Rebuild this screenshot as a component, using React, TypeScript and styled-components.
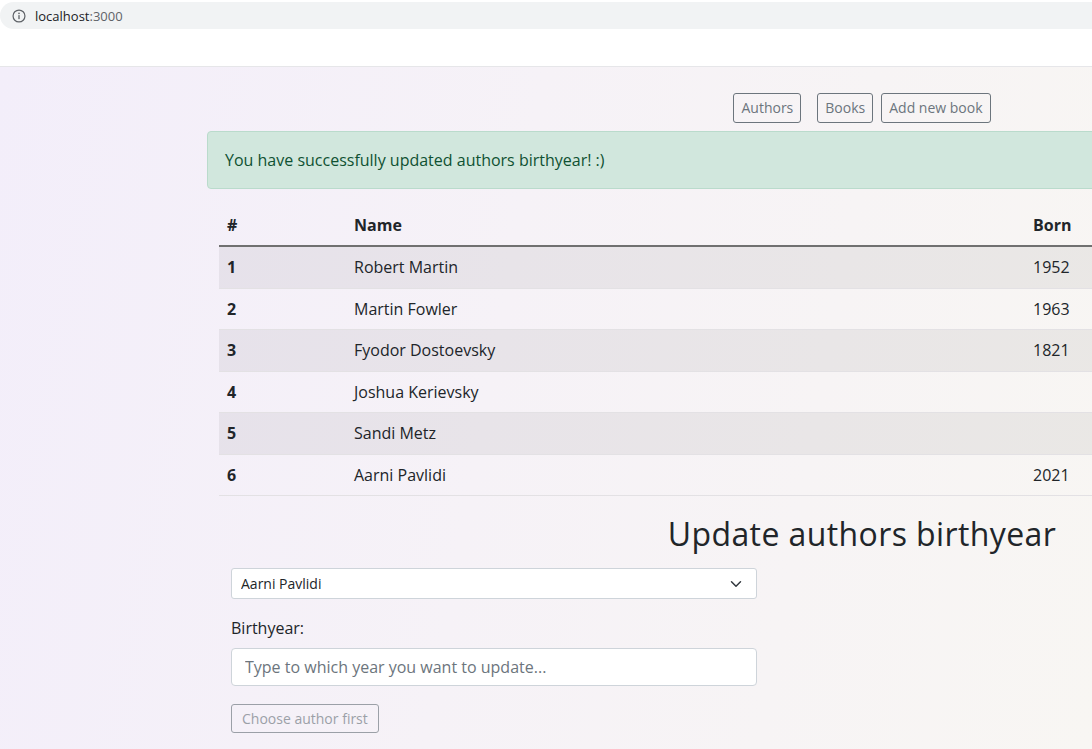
import React from "react";
import styled, { createGlobalStyle } from "styled-components";

const GlobalStyle = createGlobalStyle`
  html, body {
    margin: 0;
    padding: 0;
    overflow: hidden;
  }
  body {
    font-family: "Open Sans", "Liberation Sans", sans-serif;
    color: #212529;
    background: #ffffff;
  }
  * {
    box-sizing: border-box;
  }
`;

const BrowserBar = styled.div`
  height: 67px;
  background: #ffffff;
  border-bottom: 1px solid #e6e6e9;
  padding-top: 2px;
`;

const AddressPill = styled.div`
  display: flex;
  align-items: center;
  gap: 9px;
  height: 27px;
  width: 1120px;
  padding-left: 12px;
  background: #f1f3f4;
  border-radius: 14px;
  font-family: "Open Sans", "Liberation Sans", sans-serif;
  font-size: 13px;
  color: #202124;
`;

const Port = styled.span`
  color: #5f6368;
`;

const Page = styled.div`
  height: 682px;
  background: linear-gradient(100deg, #f3eefa 0%, #f6f2f7 45%, #f8f6f3 100%);
`;

const Container = styled.div`
  width: 1320px;
  margin-left: 207px;
  padding-top: 26px;
`;

const Nav = styled.nav`
  display: flex;
  justify-content: center;
  padding-right: 10px;
  margin-bottom: 8px;
`;

const NavButton = styled.button<{ $gap?: number }>`
  font-family: inherit;
  font-size: 14px;
  line-height: 20px;
  padding: 4px 7px;
  margin-left: ${(p) => p.$gap ?? 0}px;
  color: #6c757d;
  background: transparent;
  border: 1px solid #6c757d;
  border-radius: 3px;
  cursor: pointer;
`;

const Alert = styled.div`
  padding: 16px 17px;
  line-height: 24px;
  font-size: 16px;
  color: #0f5132;
  background: #d1e7dd;
  border: 1px solid #badbcc;
  border-radius: 4px;
  margin-bottom: 16px;
`;

const Table = styled.table`
  width: 1296px;
  margin-left: 12px;
  border-collapse: collapse;
  font-size: 16px;
  margin-bottom: 19px;
`;

const HeadCell = styled.th<{ $w: number }>`
  width: ${(p) => p.$w}px;
  text-align: left;
  padding: 8px;
  line-height: 24px;
  font-weight: 700;
  border-bottom: 2px solid #707070;
`;

const Row = styled.tr<{ $striped: boolean }>`
  background: ${(p) => (p.$striped ? "rgba(0, 0, 0, 0.055)" : "transparent")};
  border-bottom: 1px solid #e3e1e4;
`;

const IndexCell = styled.th`
  text-align: left;
  padding: 8px;
  line-height: 24.5px;
  font-weight: 700;
`;

const Cell = styled.td`
  padding: 8px;
  line-height: 24.5px;
`;

const Heading = styled.h2`
  margin: 0 0 15px;
  text-align: center;
  padding-right: 10px;
  font-size: 32px;
  font-weight: 400;
  line-height: 38px;
  letter-spacing: 0.4px;
  color: #212529;
`;

const Form = styled.form`
  width: 526px;
  margin-left: 24px;
`;

const Select = styled.select`
  display: block;
  width: 100%;
  height: 31px;
  padding: 4px 36px 4px 9px;
  font-family: inherit;
  font-size: 14px;
  color: #212529;
  background-color: #ffffff;
  background-image: url("data:image/svg+xml,%3csvg xmlns='http://www.w3.org/2000/svg' viewBox='0 0 16 16'%3e%3cpath fill='none' stroke='%23343a40' stroke-linecap='round' stroke-linejoin='round' stroke-width='2' d='M2 5l6 6 6-6'/%3e%3c/svg%3e");
  background-repeat: no-repeat;
  background-position: right 12px center;
  background-size: 16px 12px;
  border: 1px solid #ced4da;
  border-radius: 3px;
  appearance: none;
  margin-bottom: 17px;
`;

const Label = styled.label`
  display: inline-block;
  font-size: 16px;
  line-height: 24px;
  margin-bottom: 8px;
`;

const Input = styled.input`
  display: block;
  width: 100%;
  height: 38px;
  padding: 6px 13px;
  font-family: inherit;
  font-size: 16px;
  line-height: 24px;
  color: #212529;
  background: #ffffff;
  border: 1px solid #ced4da;
  border-radius: 4px;
  margin-bottom: 18px;
  &::placeholder {
    color: #6c757d;
  }
`;

const SubmitButton = styled.button`
  font-family: inherit;
  font-size: 14px;
  line-height: 21px;
  padding: 3px 10px;
  color: #6c757d;
  background: transparent;
  border: 1px solid #6c757d;
  border-radius: 3px;
  opacity: 0.65;
`;

const InfoIcon = () => (
  <svg width="14" height="14" viewBox="0 0 16 16" fill="none">
    <circle cx="8" cy="8" r="6.8" stroke="#5f6368" strokeWidth="1.4" />
    <rect x="7.25" y="7" width="1.5" height="4.6" fill="#5f6368" />
    <circle cx="8" cy="5" r="0.95" fill="#5f6368" />
  </svg>
);

const authors = [
  { name: "Robert Martin", born: "1952" },
  { name: "Martin Fowler", born: "1963" },
  { name: "Fyodor Dostoevsky", born: "1821" },
  { name: "Joshua Kerievsky", born: "" },
  { name: "Sandi Metz", born: "" },
  { name: "Aarni Pavlidi", born: "2021" },
];

const App: React.FC = () => {
  return (
    <>
      <GlobalStyle />
      <BrowserBar>
        <AddressPill>
          <InfoIcon />
          <span>
            localhost<Port>:3000</Port>
          </span>
        </AddressPill>
      </BrowserBar>
      <Page>
        <Container>
          <Nav>
            <NavButton>Authors</NavButton>
            <NavButton $gap={16}>Books</NavButton>
            <NavButton $gap={8}>Add new book</NavButton>
          </Nav>
          <Alert>You have successfully updated authors birthyear! :)</Alert>
          <Table>
            <thead>
              <tr>
                <HeadCell $w={127}>#</HeadCell>
                <HeadCell $w={679}>Name</HeadCell>
                <HeadCell $w={490}>Born</HeadCell>
              </tr>
            </thead>
            <tbody>
              {authors.map((a, i) => (
                <Row key={a.name} $striped={i % 2 === 0}>
                  <IndexCell>{i + 1}</IndexCell>
                  <Cell>{a.name}</Cell>
                  <Cell>{a.born}</Cell>
                </Row>
              ))}
            </tbody>
          </Table>
          <Heading>Update authors birthyear</Heading>
          <Form onSubmit={(e) => e.preventDefault()}>
            <Select defaultValue="Aarni Pavlidi">
              {authors.map((a) => (
                <option key={a.name} value={a.name}>
                  {a.name}
                </option>
              ))}
            </Select>
            <Label htmlFor="birthyear">Birthyear:</Label>
            <Input id="birthyear" placeholder="Type to which year you want to update..." />
            <SubmitButton disabled>Choose author first</SubmitButton>
          </Form>
        </Container>
      </Page>
    </>
  );
};

export default App;
